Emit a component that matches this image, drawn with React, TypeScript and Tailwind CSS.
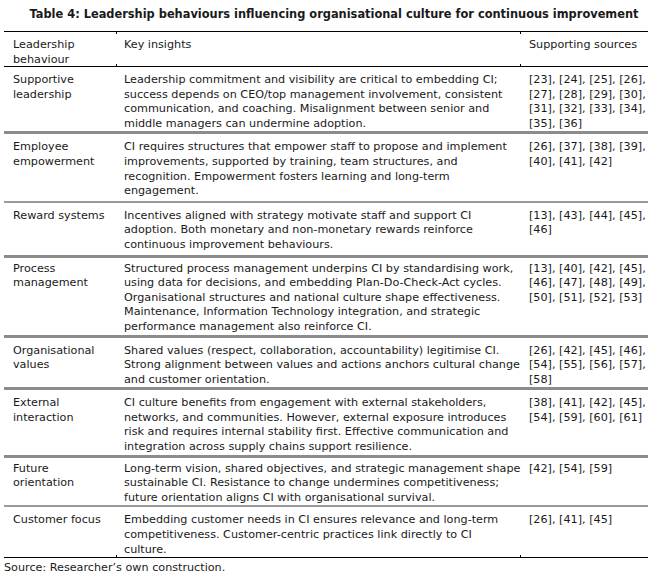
const rows: {
  behaviour: string[];
  insights: string[];
  sources: string[];
  border: string;
  pad: string;
}[] = [
  {
    behaviour: ["Supportive", "leadership"],
    insights: [
      "Leadership commitment and visibility are critical to embedding CI;",
      "success depends on CEO/top management involvement, consistent",
      "communication, and coaching. Misalignment between senior and",
      "middle managers can undermine adoption.",
    ],
    sources: ["[23], [24], [25], [26],", "[27], [28], [29], [30],", "[31], [32], [33], [34],", "[35], [36]"],
    border: "border-b-[3px] border-[#8c8c8c]",
    pad: "pt-[6px] pb-[0px]",
  },
  {
    behaviour: ["Employee", "empowerment"],
    insights: [
      "CI requires structures that empower staff to propose and implement",
      "improvements, supported by training, team structures, and",
      "recognition. Empowerment fosters learning and long-term",
      "engagement.",
    ],
    sources: ["[26], [37], [38], [39],", "[40], [41], [42]"],
    border: "border-b-[2px] border-[#9a9a9a]",
    pad: "pt-[6px] pb-[2px]",
  },
  {
    behaviour: ["Reward systems"],
    insights: [
      "Incentives aligned with strategy motivate staff and support CI",
      "adoption. Both monetary and non-monetary rewards reinforce",
      "continuous improvement behaviours.",
    ],
    sources: ["[13], [43], [44], [45],", "[46]"],
    border: "border-b-[3px] border-[#8c8c8c]",
    pad: "pt-[6px] pb-[2px]",
  },
  {
    behaviour: ["Process", "management"],
    insights: [
      "Structured process management underpins CI by standardising work,",
      "using data for decisions, and embedding Plan-Do-Check-Act cycles.",
      "Organisational structures and national culture shape effectiveness.",
      "Maintenance, Information Technology integration, and strategic",
      "performance management also reinforce CI.",
    ],
    sources: ["[13], [40], [42], [45],", "[46], [47], [48], [49],", "[50], [51], [52], [53]"],
    border: "border-b-[3px] border-[#8c8c8c]",
    pad: "pt-[4px] pb-[0px]",
  },
  {
    behaviour: ["Organisational", "values"],
    insights: [
      "Shared values (respect, collaboration, accountability) legitimise CI.",
      "Strong alignment between values and actions anchors cultural change",
      "and customer orientation.",
    ],
    sources: ["[26], [42], [45], [46],", "[54], [55], [56], [57],", "[58]"],
    border: "border-b-[3px] border-[#8c8c8c]",
    pad: "pt-[6px] pb-[0px]",
  },
  {
    behaviour: ["External", "interaction"],
    insights: [
      "CI culture benefits from engagement with external stakeholders,",
      "networks, and communities. However, external exposure introduces",
      "risk and requires internal stability first. Effective communication and",
      "integration across supply chains support resilience.",
    ],
    sources: ["[38], [41], [42], [45],", "[54], [59], [60], [61]"],
    border: "border-b-[3px] border-[#8c8c8c]",
    pad: "pt-[6px] pb-[0px]",
  },
  {
    behaviour: ["Future", "orientation"],
    insights: [
      "Long-term vision, shared objectives, and strategic management shape",
      "sustainable CI. Resistance to change undermines competitiveness;",
      "future orientation aligns CI with organisational survival.",
    ],
    sources: ["[42], [54], [59]"],
    border: "border-b-[2px] border-[#9a9a9a]",
    pad: "pt-[4px] pb-[0px]",
  },
  {
    behaviour: ["Customer focus"],
    insights: [
      "Embedding customer needs in CI ensures relevance and long-term",
      "competitiveness. Customer-centric practices link directly to CI",
      "culture.",
    ],
    sources: ["[26], [41], [45]"],
    border: "border-b border-black",
    pad: "pt-[6px] pb-[0px]",
  },
];

function Lines({ lines }: { lines: string[] }) {
  return (
    <>
      {lines.map((l, i) => (
        <div key={i} className="whitespace-nowrap">
          {l}
        </div>
      ))}
    </>
  );
}

// tiny column ticks that show where the cell borders meet the rules
function Tick({ pos }: { pos: string }) {
  return <span className={`absolute w-px h-[2px] bg-black ${pos}`} />;
}

export default function App() {
  return (
    <div className="w-[650px] h-[580px] bg-white text-[#1a1a1a] font-['DejaVu_Sans',sans-serif] text-[11.2px] leading-[14.6px]">
      <div className="h-[31px] flex items-center justify-center pl-[18px] pb-[3px] font-bold text-[11.4px]">
        Table 4: Leadership behaviours influencing organisational culture for continuous improvement
      </div>

      <div className="ml-[4px] w-[644px]">
        <div className="relative flex border-t border-b border-black h-[36px] pt-[6px]">
          <Tick pos="left-[112px] top-0" />
          <Tick pos="left-[516px] top-0" />
          <Tick pos="left-[112px] bottom-0" />
          <Tick pos="left-[516px] bottom-0" />
          <div className="w-[112px] pl-[9px]">
            <Lines lines={["Leadership", "behaviour"]} />
          </div>
          <div className="w-[404px] pl-[8px]">Key insights</div>
          <div className="w-[128px] pl-[9px]">Supporting sources</div>
        </div>

        {rows.map((r, i) => (
          <div key={i} className={`relative flex ${r.pad} ${r.border}`}>
            {i === rows.length - 1 && (
              <>
                <Tick pos="left-[112px] bottom-0" />
                <Tick pos="left-[516px] bottom-0" />
              </>
            )}
            <div className="w-[112px] pl-[9px]">
              <Lines lines={r.behaviour} />
            </div>
            <div className="w-[404px] pl-[8px]">
              <Lines lines={r.insights} />
            </div>
            <div className="w-[128px] pl-[9px]">
              <Lines lines={r.sources} />
            </div>
          </div>
        ))}

        <div className="pt-[3px]">Source: Researcher’s own construction.</div>
      </div>
    </div>
  );
}
